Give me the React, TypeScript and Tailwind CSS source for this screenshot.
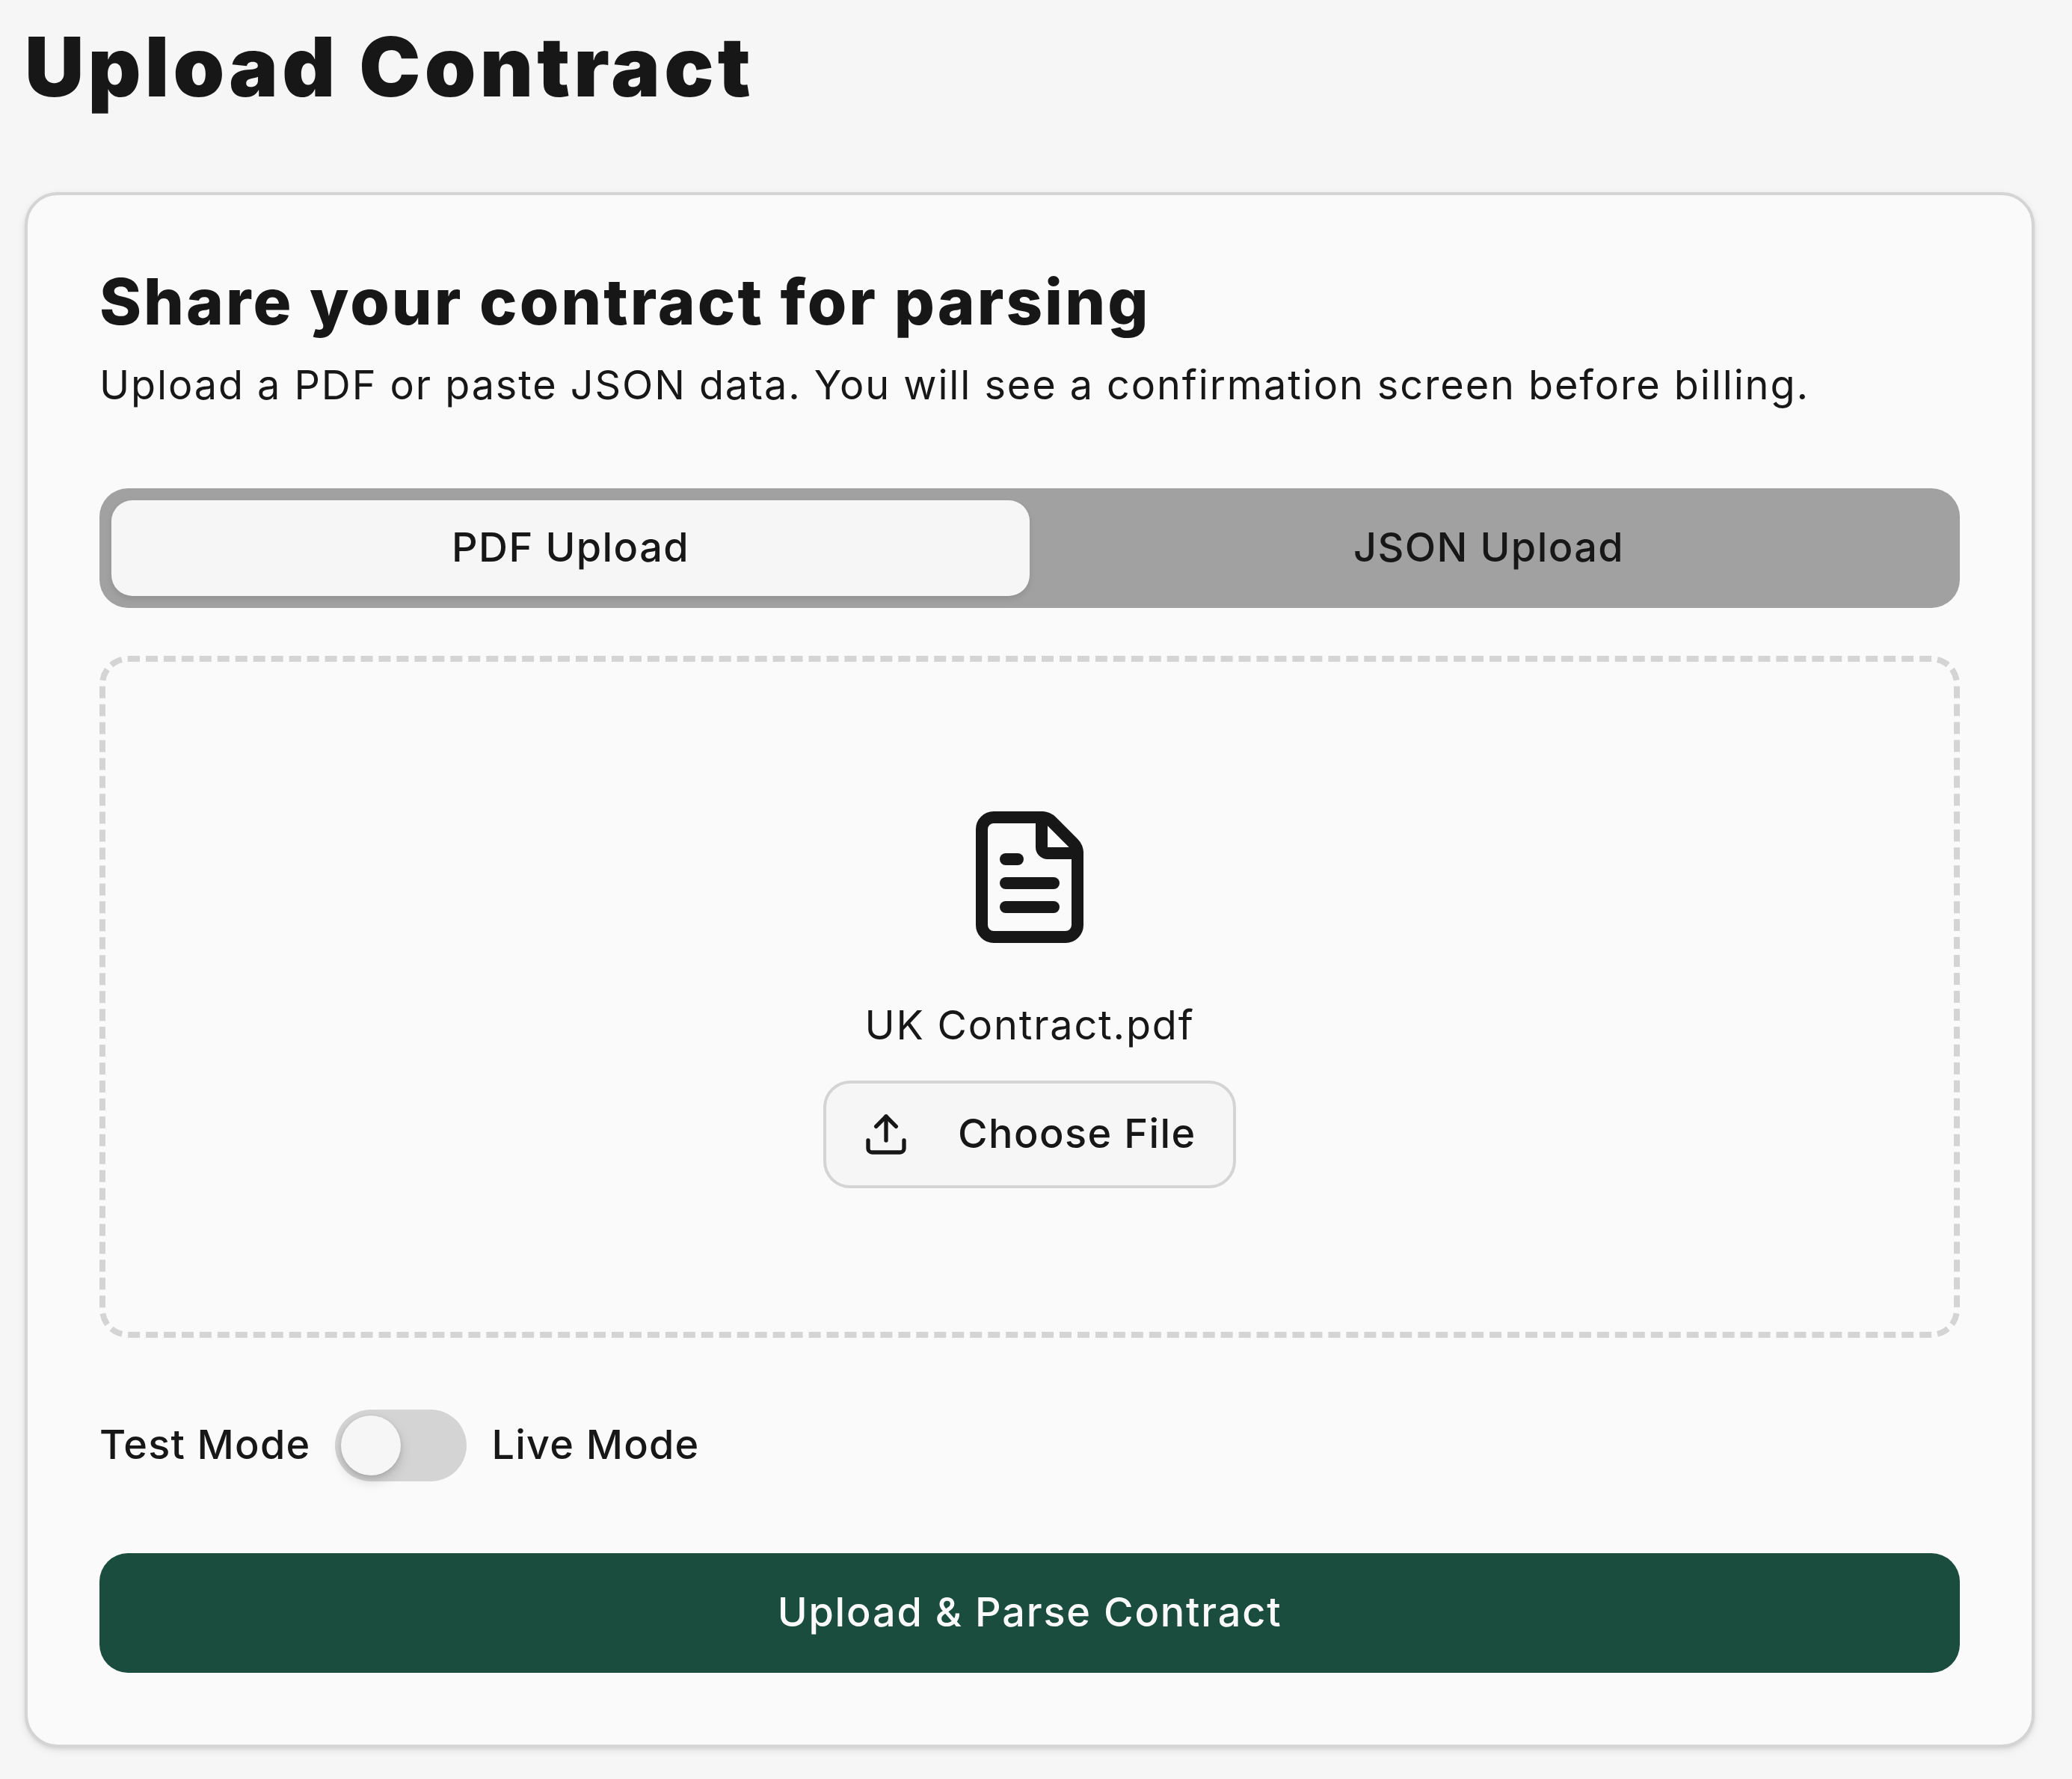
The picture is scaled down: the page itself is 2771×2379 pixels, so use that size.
import { FileText, Upload } from "lucide-react";

export default function App() {
  return (
    <div className="min-h-[2379px] bg-[#f6f6f6] pl-[33px] pr-[50px] font-['Inter',sans-serif] text-[#171717]">
      {/* Page title */}
      <h1 className="h-[257px] pt-[30px] text-[110px] leading-[118px] font-black tracking-[5.15px]">Upload Contract</h1>

      {/* Card */}
      <div className="rounded-[44px] border-4 border-[#d4d4d4] bg-[#fafafa] p-[96px] shadow-[0_4px_12px_rgba(0,0,0,0.08),0_2px_4px_rgba(0,0,0,0.08)]">
        <h2 className="text-[85px] leading-[94px] font-extrabold tracking-[3px]">Share your contract for parsing</h2>
        <p className="mt-[31px] text-[54px] leading-[66px] tracking-[1.9px]">
          Upload a PDF or paste JSON data. You will see a confirmation screen before billing.
        </p>

        {/* Tabs */}
        <div className="mt-[105px] grid h-[160px] grid-cols-2 rounded-[38px] bg-[#a1a1a1] p-[16px] text-[54px] font-medium tracking-[1.4px]">
          <button className="rounded-[28px] bg-[#f6f6f6] pb-[3px] shadow-[0_4px_8px_rgba(0,0,0,0.1)]">PDF Upload</button>
          <button className="pb-[3px]">JSON Upload</button>
        </div>

        {/* Drop zone */}
        <div className="mt-[64px] flex h-[912px] flex-col items-center rounded-[38px] border-8 border-dashed border-[#d4d4d4] pt-[192px]">
          <FileText size={192} strokeWidth={2} />
          <div className="mt-[69px] text-[54px] leading-[66px] tracking-[1.8px]">UK Contract.pdf</div>
          <button className="mt-[41px] flex h-[144px] w-[552px] items-center rounded-[36px] border-4 border-[#d4d4d4] bg-[#f6f6f6] pl-[48px] text-[54px] font-medium tracking-[1.4px]">
            <Upload size={64} strokeWidth={2} />
            <span className="ml-[64px] pb-[3px]">Choose File</span>
          </button>
        </div>

        {/* Mode switch */}
        <div className="mt-[96px] flex h-[96px] items-center text-[54px] font-medium tracking-[1.2px]">
          <span className="pb-[3px]">Test Mode</span>
          <div className="ml-[33px] h-[96px] w-[176px] rounded-full bg-[#d4d4d4] p-[8px]">
            <div className="size-[80px] rounded-full bg-[#f6f6f6] shadow-[0_8px_16px_rgba(0,0,0,0.15),0_2px_6px_rgba(0,0,0,0.1)]" />
          </div>
          <span className="ml-[33px] pb-[3px]">Live Mode</span>
        </div>

        {/* Submit */}
        <button className="mt-[96px] h-[160px] w-full rounded-[38px] bg-[#1b4d3e] pb-[3px] text-[54px] font-medium tracking-[1.8px] text-[#fafafa]">
          Upload &amp; Parse Contract
        </button>
      </div>
    </div>
  );
}
